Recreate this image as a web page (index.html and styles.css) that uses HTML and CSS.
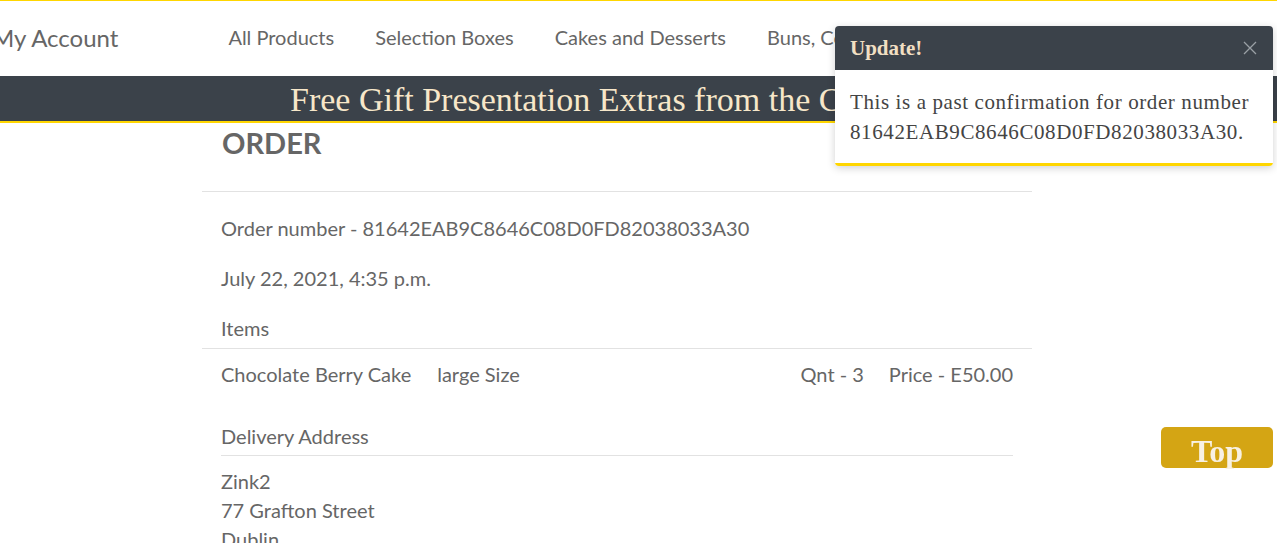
FILE: index.html
```html
<!DOCTYPE html>
<html lang="en">
<head>
<meta charset="utf-8">
<title>Order</title>
<link rel="stylesheet" href="styles.css">
</head>
<body>
<header class="site-header">
  <nav class="main-nav">
    <a class="nav-account" href="#">My Account</a>
    <ul class="nav-links">
      <li><a href="#">All Products</a></li>
      <li><a href="#">Selection Boxes</a></li>
      <li><a href="#">Cakes and Desserts</a></li>
      <li><a href="#">Buns, Cookies and Breads</a></li>
    </ul>
  </nav>
  <div class="promo-banner">Free Gift Presentation Extras from the Chef</div>
</header>

<main class="order-page">
  <h2 class="order-title">ORDER</h2>
  <hr class="rule">
  <p class="line first">Order number - 81642EAB9C8646C08D0FD82038033A30</p>
  <p class="line">July 22, 2021, 4:35 p.m.</p>
  <p class="line">Items</p>
  <hr class="rule tight">
  <div class="item-row">
    <div class="item-left">
      <span>Chocolate Berry Cake</span>
      <span>large Size</span>
    </div>
    <div class="item-right">
      <span>Qnt - 3</span>
      <span>Price - E50.00</span>
    </div>
  </div>
  <section class="address">
    <p class="address-title">Delivery Address</p>
    <hr class="rule inner">
    <p class="address-line">Zink2</p>
    <p class="address-line">77 Grafton Street</p>
    <p class="address-line">Dublin</p>
  </section>
</main>

<div class="toast">
  <div class="toast-header">
    <strong>Update!</strong>
    <span class="toast-close">
      <svg width="14" height="14" viewBox="0 0 14 14"><path d="M1 1 L13 13 M13 1 L1 13" stroke="#9aa0a6" stroke-width="1.3" fill="none"/></svg>
    </span>
  </div>
  <div class="toast-body">This is a past confirmation for order number 81642EAB9C8646C08D0FD82038033A30.</div>
</div>

<a class="top-btn" href="#">Top</a>
</body>
</html>
```

FILE: styles.css
```css
html, body {
  margin: 0;
  padding: 0;
  background: #fff;
  overflow: hidden;
}
body {
  font-family: Lato, "Open Sans", sans-serif;
  color: #666;
}
a { text-decoration: none; color: inherit; }

.site-header {
  border-top: 1px solid #ffd600;
}
.main-nav {
  height: 75px;
  box-sizing: border-box;
  padding-bottom: 3px;
  display: flex;
  align-items: center;
  white-space: nowrap;
}
.nav-account {
  font-size: 24px;
  margin-left: -8px;
  color: #666;
}
.nav-links {
  list-style: none;
  margin: 0 0 0 110px;
  padding: 0;
  display: flex;
  gap: 41px;
  font-size: 20px;
}
.promo-banner {
  height: 45px;
  background: #3b424a;
  border-bottom: 2px solid #ffd600;
  color: #f7e7c9;
  font-family: "Liberation Serif", "DejaVu Serif", serif;
  font-size: 34px;
  line-height: 48px;
  padding-left: 290px;
  white-space: nowrap;
  overflow: hidden;
}

.order-page {
  width: 830px;
  margin-left: 202px;
}
.order-title {
  margin: 0;
  padding-left: 20px;
  font-size: 29px;
  line-height: 40px;
  font-weight: 700;
  color: #666;
}
.rule {
  border: 0;
  border-top: 1px solid #e2e2e2;
  margin: 28px 0 0;
}
.rule.tight { margin-top: 5px; }
.rule.inner { margin: 4px 19px 0 19px; }
.line {
  margin: 20px 0 0;
  padding-left: 19px;
  font-size: 20px;
  line-height: 30px;
}
.line.first { margin-top: 21px; }
.item-row {
  margin-top: 10px;
  padding: 0 19px;
  display: flex;
  justify-content: space-between;
  font-size: 20px;
  line-height: 30px;
}
.item-left {
  display: flex;
  gap: 26px;
}
.item-right {
  display: flex;
  gap: 25px;
}
.address {
  margin-top: 32px;
}
.address-title {
  margin: 0;
  padding-left: 19px;
  font-size: 20px;
  line-height: 30px;
}
.address-line {
  margin: 0;
  padding-left: 19px;
  font-size: 20px;
  line-height: 29px;
}
.address-title + .rule + .address-line { margin-top: 11px; }

.toast {
  position: absolute;
  left: 835px;
  top: 26px;
  width: 438px;
  background: #fff;
  border-radius: 4px;
  box-shadow: 0 2px 8px rgba(0,0,0,0.18);
  overflow: hidden;
}
.toast-header {
  height: 44px;
  background: #3b424a;
  display: flex;
  align-items: center;
  justify-content: space-between;
  padding: 0 16px 0 15px;
  font-family: "Liberation Serif", "DejaVu Serif", serif;
  font-size: 21px;
  color: #f1dfc2;
}
.toast-close { display: flex; }
.toast-body {
  padding: 17px 10px 16px 15px;
  font-family: "Liberation Serif", "DejaVu Serif", serif;
  font-size: 21px;
  letter-spacing: 0.6px;
  line-height: 30px;
  color: #444;
  border-bottom: 3px solid #ffd600;
}

.top-btn {
  position: fixed;
  left: 1161px;
  top: 427px;
  width: 112px;
  height: 41px;
  padding-top: 7px;
  box-sizing: border-box;
  background: #d4a514;
  border-radius: 5px;
  color: #f8f1e3;
  font-family: "Liberation Serif", "DejaVu Serif", serif;
  font-weight: 700;
  font-size: 32px;
  display: flex;
  align-items: center;
  justify-content: center;
}
```
